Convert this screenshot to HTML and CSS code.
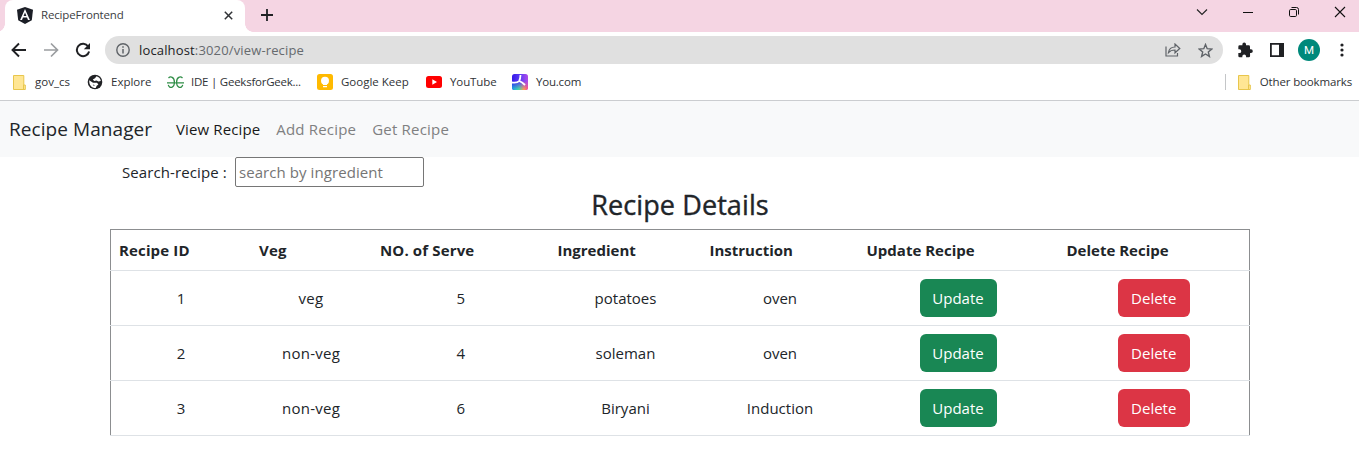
FILE: index.html
```html
<!DOCTYPE html>
<html lang="en">
<head>
<meta charset="utf-8">
<title>RecipeFrontend</title>
<link rel="stylesheet" href="styles.css">
</head>
<body>
<div class="tabstrip">
  <div class="tab">
    <svg class="tab-logo" width="16" height="17" viewBox="0 0 16 17"><path fill="#1b1e26" d="M8 0l8 2.800-1.200 10.400L8 17l-6.800-3.800L0 2.800z"/><path fill="#fff" fill-rule="evenodd" d="M8 2l4.900 11h-1.900l-1-2.500H6L5 13H3.100zM8 5.500L6.600 9h2.800z"/></svg>
    <span class="tab-title">RecipeFrontend</span>
    <svg class="tab-close" width="9" height="9" viewBox="0 0 9 9"><path d="M.8.8l7.400 7.400M8.200.8L.8 8.200" stroke="#303236" stroke-width="1.500"/></svg>
  </div>
  <svg class="new-tab" width="12" height="12" viewBox="0 0 12 12"><path d="M6 0v12M0 6h12" stroke="#202124" stroke-width="1.800"/></svg>
  <div class="window-controls">
    <svg width="12" height="12" viewBox="0 0 12 12"><path d="M1 3.500l5 5 5-5" fill="none" stroke="#222" stroke-width="1.100"/></svg>
    <svg width="12" height="12" viewBox="0 0 12 12"><path d="M1 6.500h10" stroke="#111"/></svg>
    <svg width="12" height="12" viewBox="0 0 12 12"><g fill="none" stroke="#111"><rect x="1.500" y="3.500" width="7" height="7" rx="1.200"/><path d="M3.500 1.500h5a2 2 0 012 2v5"/></g></svg>
    <svg width="12" height="12" viewBox="0 0 12 12"><path d="M1 1l10 10M11 1L1 11" stroke="#111" stroke-width="1.100"/></svg>
  </div>
</div>
<div class="toolbar">
  <svg class="nav-icon" width="16" height="16" viewBox="0 0 16 16"><path d="M15 8H2M8 1.500L1.500 8 8 14.500" fill="none" stroke="#202124" stroke-width="1.900"/></svg>
  <svg class="nav-icon" width="16" height="16" viewBox="0 0 16 16"><path d="M1 8h13M8 1.500L14.500 8 8 14.500" fill="none" stroke="#9b9da0" stroke-width="1.700"/></svg>
  <svg class="nav-icon" width="16" height="16" viewBox="0 0 16 16"><path d="M13.200 4.500A6.200 6.200 0 1014.100 9.500" fill="none" stroke="#202124" stroke-width="2"/><path fill="#202124" d="M15 1v6.200H8.800z"/></svg>
  <div class="address">
    <svg width="14" height="14" viewBox="0 0 14 14"><circle cx="7" cy="7" r="6.200" fill="none" stroke="#5f6368" stroke-width="1.400"/><path d="M7 6v4.500M7 3.300v1.500" stroke="#5f6368" stroke-width="1.500"/></svg>
    <span class="url"><b class="host">localhost</b>:3020/view-recipe</span>
    <svg class="share" width="16" height="14" viewBox="0 0 16 14"><g fill="none" stroke="#5f6368" stroke-width="1.200"><path d="M1 3.500v9.500h11.500v-3"/><path d="M3.500 9.500C4 6 6 4 10 4V1l4.800 4.500L10 9.800V7C7 7 5 7.800 3.500 9.500z"/></g></svg>
    <svg class="star" width="15" height="15" viewBox="0 0 15 15"><path d="M7.500 1.500l1.700 4.200 4.600.300-3.500 3 1.100 4.400-3.900-2.400-3.900 2.400L4.700 9 1.200 6l4.600-.300z" fill="none" stroke="#5f6368" stroke-width="1.400"/></svg>
  </div>
  <svg class="puzzle" width="16" height="16" viewBox="0 0 24 24"><path fill="#202124" d="M21 11h-1.500V7a2 2 0 00-2-2h-4V3.500a2.700 2.700 0 00-5.400 0V5H4a2 2 0 00-2 2v4h1.600a2.800 2.800 0 010 5.600H2V21a2 2 0 002 2h4v-1.600a2.800 2.800 0 015.600 0V23h4a2 2 0 002-2v-4.600H21A2.700 2.700 0 0021 11z"/></svg>
  <svg class="panel" width="14" height="14" viewBox="0 0 14 14"><path fill="#202124" fill-rule="evenodd" d="M0 0h14v14H0zM1.800 1.800v10.400H9V1.800z"/></svg>
  <span class="avatar">M</span>
  <svg class="dots" width="4" height="14" viewBox="0 0 4 14"><g fill="#202124"><circle cx="2" cy="2" r="1.600"/><circle cx="2" cy="7" r="1.600"/><circle cx="2" cy="12" r="1.600"/></g></svg>
</div>
<div class="bookmarks">
  <svg class="bm-folder" width="13" height="15" viewBox="0 0 13 15"><path d="M.5.500h10.300v9.500H12.300v4.500H.5z" fill="#ffe694" stroke="#e8c64c"/><path d="M10.500 10v4" stroke="#e8c64c"/></svg>
  <span class="bm bm-gov">gov_cs</span>
  <svg class="bm-icon" width="16" height="16" viewBox="0 0 16 16"><circle cx="8" cy="8" r="7.300" fill="#202124"/><path d="M9.500 2.200C12 2.700 13.600 4.700 13.800 7L11.500 7.600 9.500 6.500 7.200 7 5.800 5.500 8 4.300zM2.200 6.300L6 8.800h4l1.400 1.700-1.700 1.300-1 2.300C5 14.200 2 11.500 2.200 6.300zM5.800 10.500l.8 1.300 1.400-.6z" fill="#fff" fill-rule="evenodd"/></svg>
  <span class="bm bm-explore">Explore</span>
  <svg class="bm-icon" width="17" height="13" viewBox="0 0 17 13"><g fill="none" stroke="#2f8d46" stroke-width="1.300"><path d="M1.500 2C3.500 0 7.400.800 7.400 6.300S2.500 13.300 1.300 8.800M0 6.800h8.500"/><path d="M15.500 2C13.500 0 9.600.800 9.600 6.300s4.900 7 6.100 2.500M17 6.800H8.500"/></g></svg>
  <span class="bm bm-ide">IDE | GeeksforGeek...</span>
  <svg class="bm-icon" width="16" height="16" viewBox="0 0 16 16"><rect width="16" height="16" rx="2.500" fill="#ffba00"/><circle cx="8" cy="6.800" r="4" fill="#fff"/><path fill="#fff" d="M6 9h4v2H6zM6 12h4v1.300H6z"/></svg>
  <span class="bm bm-keep">Google Keep</span>
  <svg class="bm-icon" width="16" height="12" viewBox="0 0 16 12"><rect width="16" height="12" rx="2.500" fill="#f00"/><path fill="#fff" d="M6.300 3.300v5.400L11 6z"/></svg>
  <span class="bm bm-yt">YouTube</span>
  <svg class="bm-icon" width="16" height="16" viewBox="0 0 16 16"><defs><linearGradient id="you" x1="0" y1="0" x2="1" y2="0"><stop offset="0" stop-color="#3519e8"/><stop offset=".5" stop-color="#5b3cf5"/><stop offset="1" stop-color="#b14be8"/></linearGradient><linearGradient id="glow" x1="0" y1="0" x2="1" y2="0"><stop offset="0" stop-color="#16a8e8"/><stop offset=".45" stop-color="#4cd7a0"/><stop offset=".75" stop-color="#ff9a52"/><stop offset="1" stop-color="#ff4f8b"/></linearGradient><linearGradient id="fade" x1="0" y1="0" x2="0" y2="1"><stop offset=".45" stop-color="#000"/><stop offset=".95" stop-color="#fff"/></linearGradient><mask id="low"><rect width="16" height="16" fill="url(#fade)"/></mask></defs><rect width="16" height="16" rx="2.500" fill="url(#you)"/><rect width="16" height="16" rx="2.500" fill="url(#glow)" mask="url(#low)"/><path d="M8.500 1Q8.300 5 7.200 7 5 9.300 0 8.500M7.200 7Q10 8 13 11" fill="none" stroke="#fff" stroke-width="1.800"/></svg>
  <span class="bm bm-you">You.com</span>
  <span class="bm-divider"></span>
  <svg class="bm-folder" width="13" height="15" viewBox="0 0 13 15"><path d="M.5.500h10.300v9.500H12.300v4.500H.5z" fill="#ffe694" stroke="#e8c64c"/><path d="M10.500 10v4" stroke="#e8c64c"/></svg>
  <span class="bm bm-other">Other bookmarks</span>
</div>
<nav class="navbar">
  <a class="brand">Recipe Manager</a>
  <a class="link active">View Recipe</a>
  <a class="link">Add Recipe</a>
  <a class="link">Get Recipe</a>
</nav>
<main class="content">
  <div class="search">
    <label for="q">Search-recipe :</label>
    <input id="q" type="text" placeholder="search by ingredient">
  </div>
  <h1>Recipe Details</h1>
  <table>
    <colgroup><col class="c1"><col class="c2"><col class="c3"><col class="c4"><col class="c5"><col class="c6"><col class="c7"></colgroup>
    <thead><tr><th>Recipe ID</th><th>Veg</th><th>NO. of Serve</th><th>Ingredient</th><th>Instruction</th><th>Update Recipe</th><th>Delete Recipe</th></tr></thead>
    <tbody>
      <tr><td>1</td><td>veg</td><td>5</td><td>potatoes</td><td>oven</td><td><button class="btn update">Update</button></td><td><button class="btn delete">Delete</button></td></tr>
      <tr><td>2</td><td>non-veg</td><td>4</td><td>soleman</td><td>oven</td><td><button class="btn update">Update</button></td><td><button class="btn delete">Delete</button></td></tr>
      <tr><td>3</td><td>non-veg</td><td>6</td><td>Biryani</td><td>Induction</td><td><button class="btn update">Update</button></td><td><button class="btn delete">Delete</button></td></tr>
    </tbody>
  </table>
</main>
</body>
</html>
```
FILE: styles.css
```css
* { box-sizing: border-box; }
body {
  margin: 0;
  background: #fff;
  color: #212529;
  font: 15px/24px "Open Sans", "Noto Sans", sans-serif;
  overflow: hidden;
}
svg { display: block; flex: none; }

.tabstrip { display: flex; height: 32px; background: #f5d5e3; padding-left: 5px; }
.tab {
  position: relative;
  display: flex;
  align-items: center;
  width: 240px;
  height: 32px;
  padding: 0 12px 2px;
  background: #fff;
  border-radius: 8px 8px 0 0;
}
.tab::before, .tab::after {
  content: "";
  position: absolute;
  bottom: 0;
  width: 8px;
  height: 8px;
}
.tab::before { left: -8px; background: radial-gradient(circle at 0 0, #f5d5e3 7.5px, #fff 8px); }
.tab::after { right: -8px; background: radial-gradient(circle at 100% 0, #f5d5e3 7.5px, #fff 8px); }
.tab-title { margin-left: 8px; font-size: 11.5px; line-height: 16px; letter-spacing: -0.15px; color: #3c4043; }
.tab-close { margin-left: auto; }
.new-tab { margin: 9px 0 0 16px; }
.window-controls { display: flex; gap: 34px; margin: 6px 13px 0 auto; }

.toolbar { display: flex; align-items: center; height: 36px; padding: 0 15px 0 11px; }
.nav-icon { margin-right: 16px; }
.address {
  display: flex;
  align-items: center;
  width: 1118px;
  height: 28px;
  margin-left: -2px;
  padding: 0 10px 0 11px;
  border-radius: 14px;
  background: #e0e0e0;
}
.url { margin-left: 9px; font-size: 13px; line-height: 18px; letter-spacing: 0.15px; color: #666a6e; }
.host { font-weight: 400; color: #202124; }
.share { margin-left: auto; }
.star { margin-left: 17px; }
.puzzle { margin-left: 14px; }
.panel { margin-left: 17px; }
.avatar {
  width: 22px;
  height: 22px;
  margin-left: 14px;
  border-radius: 50%;
  background: #00897b;
  color: #fff;
  font: 11.5px/22px Roboto, sans-serif;
  text-align: center;
}
.dots { margin-left: auto; }

.bookmarks { display: flex; align-items: center; height: 32px; padding: 0 7px 4px 13px; }
.bm { font-size: 11.5px; line-height: 16px; color: #303236; white-space: nowrap; }
.bm-gov { width: 52px; margin-left: 9px; }
.bm-explore { width: 56px; margin-left: 8px; }
.bm-ide { width: 126px; margin-left: 7px; letter-spacing: -0.24px; }
.bm-keep { width: 85px; margin-left: 8px; }
.bm-yt { width: 62px; margin-left: 8px; letter-spacing: -0.1px; }
.bm-you { margin-left: 8px; letter-spacing: -0.2px; }
.bm-divider { width: 1px; height: 16px; margin: 0 12px 0 auto; background: #c4c6c8; }
.bm-other { margin-left: 9px; letter-spacing: -0.15px; }

.navbar {
  display: flex;
  align-items: center;
  height: 57px;
  padding: 0 9px 0 9px;
  border-top: 1px solid #cbcdd0;
  background: #f8f9fa;
}
.brand { width: 167px; font-size: 19px; line-height: 30px; letter-spacing: 0.07px; padding-bottom: 0; }
.link { margin-right: 16px; color: #7f8081; letter-spacing: 0.12px; }
.link + .link { letter-spacing: 0.2px; }
.link.active { color: #191919; }

.content { width: 1140px; margin: 0 auto 0 110px; }
.search { display: flex; align-items: center; height: 30px; padding-left: 12px; }
.search label { width: 113px; letter-spacing: 0.1px; }
.search input {
  width: 189px;
  height: 30px;
  padding: 1px 3px;
  border: 1px solid #767676;
  border-radius: 2px;
  font: inherit;
  letter-spacing: 0.07px;
}
.search input::placeholder { color: #757575; opacity: 1; }
h1 {
  height: 34px;
  margin: 1px 0 7px;
  font-size: 27px;
  line-height: 34px;
  font-weight: 500;
  letter-spacing: 0.1px;
  text-align: center;
  -webkit-text-stroke: 0.4px #212529;
}
table { width: 1140px; table-layout: fixed; border-collapse: collapse; border: 1px solid #8c8e90; }
.c1 { width: 140.5px; } .c2 { width: 121px; } .c3 { width: 177.5px; } .c4 { width: 152px; }
.c5 { width: 157px; } .c6 { width: 200px; }
th { height: 41px; padding: 0 8px; border-bottom: 1px solid #dee2e6; font-weight: 700; text-align: left; white-space: nowrap; }
th:nth-child(-n+3) { letter-spacing: 0.14px; }
td { height: 55px; padding: 0; border-bottom: 1px solid #dee2e6; text-align: center; }
td:nth-child(2) { padding-right: 1px; letter-spacing: 0.25px; }
td:nth-child(6) { padding-right: 1px; }
.btn { display: block; height: 38px; margin: 0 auto; padding: 0; border: 0; border-radius: 6px; color: #fff; font: inherit; }
.update { width: 77px; background: #198754; }
.delete { width: 72px; background: #dc3545; }
```
